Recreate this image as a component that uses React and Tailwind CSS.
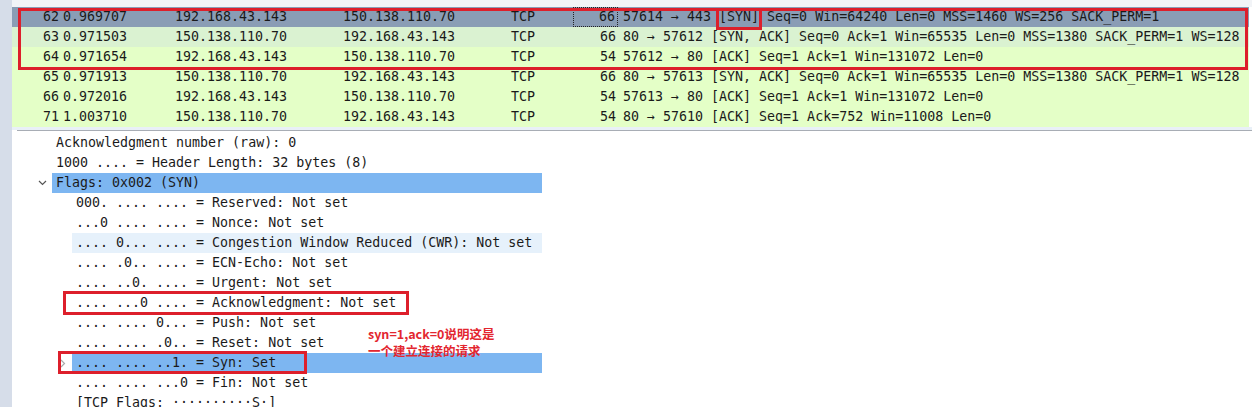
import React from "react";

const mono = { fontFamily: '"DejaVu Sans Mono", "Liberation Mono", monospace' };

const packets = [
  { no: "62", t: "0.969707", src: "192.168.43.143", dst: "150.138.110.70", len: "66", info: "57614 → 443 [SYN] Seq=0 Win=64240 Len=0 MSS=1460 WS=256 SACK_PERM=1", kind: "sel" },
  { no: "63", t: "0.971503", src: "150.138.110.70", dst: "192.168.43.143", len: "66", info: "80 → 57612 [SYN, ACK] Seq=0 Ack=1 Win=65535 Len=0 MSS=1380 SACK_PERM=1 WS=128", kind: "hov" },
  { no: "64", t: "0.971654", src: "192.168.43.143", dst: "150.138.110.70", len: "54", info: "57612 → 80 [ACK] Seq=1 Ack=1 Win=131072 Len=0", kind: "n" },
  { no: "65", t: "0.971913", src: "150.138.110.70", dst: "192.168.43.143", len: "66", info: "80 → 57613 [SYN, ACK] Seq=0 Ack=1 Win=65535 Len=0 MSS=1380 SACK_PERM=1 WS=128", kind: "n" },
  { no: "66", t: "0.972016", src: "192.168.43.143", dst: "150.138.110.70", len: "54", info: "57613 → 80 [ACK] Seq=1 Ack=1 Win=131072 Len=0", kind: "n" },
  { no: "71", t: "1.003710", src: "150.138.110.70", dst: "192.168.43.143", len: "54", info: "80 → 57610 [ACK] Seq=1 Ack=752 Win=11008 Len=0", kind: "n" },
];

function PacketRow({ p }) {
  const bg =
    p.kind === "sel" ? "bg-[#8a9db5]" : p.kind === "hov" ? "bg-[#daf2d1]" : "bg-[#e4ffc7]";
  return (
    <div className={`flex h-[20px] shrink-0 items-center whitespace-pre text-[13.3px] text-[#1a1a1a] ${bg}`}>
      <div className="w-[47px] text-right">{p.no}</div>
      <div className="w-[112px] pl-[4px]">{p.t}</div>
      <div className="w-[168px] pl-[4px]">{p.src}</div>
      <div className="w-[168px] pl-[4px]">{p.dst}</div>
      <div className="w-[66px] pl-[4px]">TCP</div>
      <div
        className={`flex h-[20px] w-[45px] items-center justify-end pr-[2px] ${
          p.kind === "sel" ? "border border-dotted border-[#222]" : ""
        }`}
      >
        {p.len}
      </div>
      <div className="flex-1 pl-[5px]">{p.info}</div>
    </div>
  );
}

function Detail({ text, indent = 40, hl, chevron, arrow }) {
  const bg = hl === "sel" ? "bg-[#7db6f1]" : hl === "soft" ? "bg-[#e6f1fb]" : "";
  return (
    <div className="relative flex h-[20px] shrink-0 items-center">
      {chevron && (
        <svg className="absolute left-[26px] top-[7px]" width="9" height="6" viewBox="0 0 9 6">
          <polyline points="1,1 4.5,4.5 8,1" fill="none" stroke="#555" strokeWidth="1.2" />
        </svg>
      )}
      {arrow && (
        <svg className="absolute left-[48px] top-[6px]" width="6" height="9" viewBox="0 0 6 9">
          <polyline points="1,1 4.5,4.5 1,8" fill="none" stroke="#aaa" strokeWidth="1.2" />
        </svg>
      )}
      <div
        className={`flex h-[20px] items-center whitespace-pre pl-[4px] text-[13.3px] text-[#1a1a1a] ${bg}`}
        style={{ marginLeft: indent, width: 530 - indent }}
      >
        {text}
      </div>
    </div>
  );
}

export default function App() {
  return (
    <div className="relative flex h-[407px] w-[1252px] overflow-hidden bg-white" style={mono}>
      <div className="w-[12px] shrink-0 bg-[#d6dde9]" />
      <div className="flex min-w-0 flex-1 flex-col">
        <div className="h-[7px] shrink-0 bg-[#f2f4f7]" />
        <div className="mr-[3px] flex shrink-0 flex-col">
          {packets.map((p) => (
            <PacketRow key={p.no} p={p} />
          ))}
        </div>
        <div className="h-[3px] shrink-0 bg-[#e9f0f7]" />
        <div className="ml-[5px] h-px shrink-0 bg-[#a8adb5]" />
        <div className="flex shrink-0 flex-col pt-[2px]">
          <Detail text="Acknowledgment number (raw): 0" />
          <Detail text="1000 .... = Header Length: 32 bytes (8)" />
          <Detail text="Flags: 0x002 (SYN)" hl="sel" chevron />
          <Detail indent={60} text="000. .... .... = Reserved: Not set" />
          <Detail indent={60} text="...0 .... .... = Nonce: Not set" />
          <Detail indent={60} hl="soft" text=".... 0... .... = Congestion Window Reduced (CWR): Not set" />
          <Detail indent={60} text=".... .0.. .... = ECN-Echo: Not set" />
          <Detail indent={60} text=".... ..0. .... = Urgent: Not set" />
          <Detail indent={60} text=".... ...0 .... = Acknowledgment: Not set" />
          <Detail indent={60} text=".... .... 0... = Push: Not set" />
          <Detail indent={60} text=".... .... .0.. = Reset: Not set" />
          <Detail indent={60} hl="sel" arrow text=".... .... ..1. = Syn: Set" />
          <Detail indent={60} text=".... .... ...0 = Fin: Not set" />
          <Detail indent={60} text="[TCP Flags: ··········S·]" />
        </div>
      </div>

      {/* annotation boxes */}
      <div className="pointer-events-none absolute left-[18px] top-[8px] h-[62px] w-[1230px] border-[3px] border-[#dd1f2b]" />
      <div className="pointer-events-none absolute left-[716px] top-[8px] h-[22px] w-[46px] border-[3px] border-[#dd1f2b]" />
      <div className="pointer-events-none absolute left-[63px] top-[291px] h-[24px] w-[346px] border-[3px] border-[#dd1f2b]" />
      <div className="pointer-events-none absolute left-[58px] top-[351px] h-[23px] w-[249px] border-[3px] border-[#dd1f2b]" />
      <div
        className="absolute left-[368px] top-[325px] text-[12.5px] font-bold leading-[17px] text-[#e3262f]"
        style={{ fontFamily: '"Noto Sans CJK SC", "Noto Sans", sans-serif' }}
      >
        <div>syn=1,ack=0说明这是</div>
        <div>一个建立连接的请求</div>
      </div>
    </div>
  );
}
